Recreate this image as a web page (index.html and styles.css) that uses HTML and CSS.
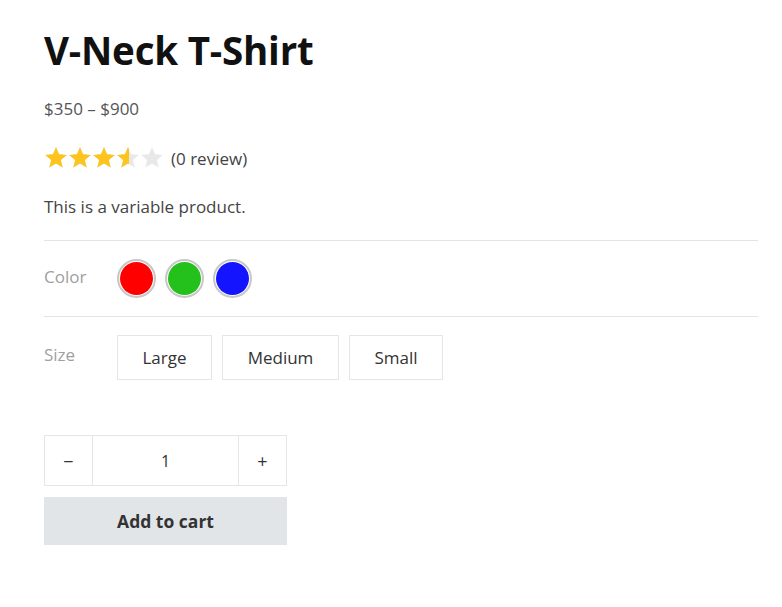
FILE: index.html
```html
<!DOCTYPE html>
<html>
<head>
<meta charset="utf-8">
<link rel="stylesheet" href="styles.css">
</head>
<body>
<div class="product">
  <h1 class="title">V-Neck T-Shirt</h1>
  <p class="price">$350 – $900</p>
  <div class="rating">
    <div class="stars">
      <svg class="stars-layer" width="120" height="22" viewBox="0 0 120 22" aria-hidden="true">
        <defs>
          <polygon id="st" points="12,0 15,7.2 22.8,7.9 16.9,12.9 18.7,20.6 12,16.6 5.3,20.6 7.1,12.9 1.2,7.9 9,7.2"/>
        </defs>
        <g fill="#e8e8e8">
          <use href="#st" x="0"/><use href="#st" x="24"/><use href="#st" x="48"/><use href="#st" x="72"/><use href="#st" x="96"/>
        </g>
      </svg>
      <div class="stars-fill" style="width: 85px">
        <svg width="120" height="22" viewBox="0 0 120 22" aria-hidden="true">
          <g fill="#fcc51d">
            <use href="#st" x="0"/><use href="#st" x="24"/><use href="#st" x="48"/><use href="#st" x="72"/><use href="#st" x="96"/>
          </g>
        </svg>
      </div>
    </div>
    <span class="reviews">(0 review)</span>
  </div>
  <p class="desc">This is a variable product.</p>
  <div class="attr attr-color">
    <span class="attr-label">Color</span>
    <div class="swatches">
      <span class="swatch"><span class="dot red"></span></span>
      <span class="swatch"><span class="dot green"></span></span>
      <span class="swatch"><span class="dot blue"></span></span>
    </div>
  </div>
  <div class="attr attr-size">
    <span class="attr-label">Size</span>
    <div class="sizes">
      <span class="size size-l">Large</span>
      <span class="size size-m">Medium</span>
      <span class="size size-s">Small</span>
    </div>
  </div>
  <div class="cart">
    <div class="qty">
      <span class="qty-btn">−</span>
      <span class="qty-val">1</span>
      <span class="qty-btn">+</span>
    </div>
    <button class="add">Add to cart</button>
  </div>
</div>
</body>
</html>
```
FILE: styles.css
```css
html, body { margin: 0; padding: 0; background: #fff; }
body {
  font-family: "Open Sans", "Noto Sans", sans-serif;
  color: #444;
}
.product {
  padding: 24px 24px 0 44px;
}
.title {
  margin: 0;
  font-size: 38.5px;
  line-height: 52px;
  font-weight: 700;
  color: #111;
  letter-spacing: -0.2px;
}
.price {
  margin: 21px 0 0;
  font-size: 17px;
  line-height: 24px;
  color: #555;
}
.rating {
  display: flex;
  align-items: center;
  margin-top: 24px;
  height: 26px;
}
.stars {
  position: relative;
  width: 120px;
  height: 22px;
}
.stars-layer { display: block; }
.stars-fill {
  position: absolute;
  left: 0; top: 0;
  height: 22px;
  overflow: hidden;
}
.stars-fill svg { display: block; }
.reviews {
  margin-left: 7px;
  font-size: 17px;
  color: #444;
}
.desc {
  margin: 24px 0 0;
  font-size: 17px;
  line-height: 24px;
}
.attr {
  display: flex;
  border-top: 1px solid #e4e4e4;
}
.attr-color {
  margin-top: 21px;
  padding: 18px 0 18px;
  align-items: center;
}
.attr-size {
  padding: 18px 0 0;
  align-items: flex-start;
}
.attr-label {
  width: 73px;
  font-size: 17px;
  color: #a0a0a0;
  flex: none;
}
.attr-color .attr-label { margin-top: -4px; }
.attr-size .attr-label { margin-top: 8px; line-height: 24px; }
.swatches { display: flex; gap: 9px; }
.swatch {
  width: 39px; height: 39px;
  box-sizing: border-box;
  border-radius: 50%;
  border: 2px solid #c8c8c8;
  padding: 1px;
  background: #fff;
  display: block;
}
.dot { display: block; width: 100%; height: 100%; border-radius: 50%; }
.red { background: #ff0000; }
.green { background: #24c01b; }
.blue { background: #1414ff; }
.sizes { display: flex; gap: 10px; }
.size {
  display: flex;
  align-items: center;
  justify-content: center;
  height: 45px;
  box-sizing: border-box;
  border: 1px solid #e6e6e6;
  font-size: 17px;
  color: #333;
}
.size-l { width: 95px; }
.size-m { width: 117px; }
.size-s { width: 94px; }
.cart {
  margin-top: 55px;
  width: 243px;
}
.qty {
  display: flex;
  height: 51px;
  box-sizing: border-box;
  border: 1px solid #e6e6e6;
}
.qty-btn {
  width: 47px;
  display: flex; align-items: center; justify-content: center;
  font-size: 18px;
  color: #333;
}
.qty-val {
  flex: 1;
  display: flex; align-items: center; justify-content: center;
  border-left: 1px solid #e6e6e6;
  border-right: 1px solid #e6e6e6;
  font-size: 16px;
  color: #333;
}
.add {
  display: block;
  margin-top: 11px;
  width: 100%;
  height: 48px;
  border: 0;
  background: #e2e5e8;
  font-family: inherit;
  font-size: 17.5px;
  font-weight: 700;
  color: #333;
  cursor: pointer;
}
```
